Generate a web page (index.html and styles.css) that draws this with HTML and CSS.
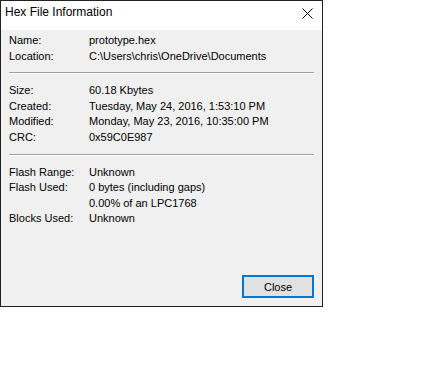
FILE: index.html
```html
<!DOCTYPE html>
<html>
<head>
<meta charset="utf-8">
<link rel="stylesheet" href="styles.css">
</head>
<body>
<div class="dialog">
  <div class="titlebar">
    <span class="title">Hex File Information</span>
    <svg class="close-x" width="11" height="11" viewBox="0 0 11 11">
      <path d="M0.5 0.5 L10.5 10.5 M10.5 0.5 L0.5 10.5" stroke="#000" stroke-width="1" fill="none"/>
    </svg>
  </div>
  <div class="content">
    <div class="grid">
      <span>Name:</span><span>prototype.hex</span>
      <span>Location:</span><span>C:\Users\chris\OneDrive\Documents</span>
    </div>
    <div class="sep"></div>
    <div class="grid">
      <span>Size:</span><span>60.18 Kbytes</span>
      <span>Created:</span><span>Tuesday, May 24, 2016, 1:53:10 PM</span>
      <span>Modified:</span><span>Monday, May 23, 2016, 10:35:00 PM</span>
      <span>CRC:</span><span>0x59C0E987</span>
    </div>
    <div class="sep"></div>
    <div class="grid">
      <span>Flash Range:</span><span>Unknown</span>
      <span>Flash Used:</span><span>0 bytes (including gaps)</span>
      <span></span><span>0.00% of an LPC1768</span>
      <span>Blocks Used:</span><span>Unknown</span>
    </div>
  </div>
  <div class="footer">
    <button class="btn">Close</button>
  </div>
</div>
</body>
</html>
```
FILE: styles.css
```css
html, body {
  margin: 0;
  padding: 0;
  background: #ffffff;
}
body {
  font-family: "Liberation Sans", Arial, sans-serif;
  font-size: 11px;
  color: #000;
}
.dialog {
  width: 323px;
  height: 307px;
  box-sizing: border-box;
  border: 1px solid #222;
  background: #f0f0f0;
  display: flex;
  flex-direction: column;
}
.titlebar {
  height: 29px;
  background: #fff;
  display: flex;
  align-items: flex-start;
  justify-content: space-between;
  flex-shrink: 0;
}
.title {
  font-size: 12px;
  line-height: 14px;
  margin-top: 4px;
  margin-left: 4px;
}
.close-x {
  margin-top: 7px;
  margin-right: 9px;
}
.content {
  flex: 1;
  padding: 3px 8px 0 8px;
}
.grid {
  display: grid;
  grid-template-columns: 80px 1fr;
  line-height: 15.6px;
  white-space: nowrap;
}
.sep {
  height: 1px;
  background: #a0a0a0;
  border-bottom: 1px solid #fff;
  margin: 8px 0 9px 0;
}
.footer {
  display: flex;
  justify-content: flex-end;
  padding: 0 8px 8px 0;
}
.btn {
  width: 72px;
  height: 23px;
  box-sizing: border-box;
  border: 2px solid #0078d7;
  background: #e1e1e1;
  font-family: "Liberation Sans", Arial, sans-serif;
  font-size: 11px;
  color: #000;
  padding: 0;
  margin: 0;
}
```
